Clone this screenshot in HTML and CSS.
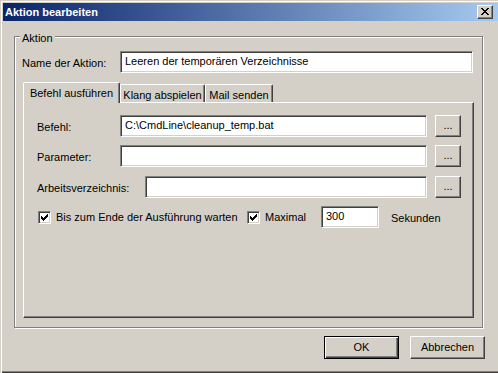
FILE: index.html
```html
<!DOCTYPE html>
<html lang="de">
<head>
<meta charset="utf-8">
<title>Aktion bearbeiten</title>
<link rel="stylesheet" href="styles.css">
</head>
<body>
<div class="window">
  <div class="titlebar">
    <span class="title">Aktion bearbeiten</span>
    <div class="close">
      <svg width="8" height="7" viewBox="0 0 8 7" shape-rendering="crispEdges"><path fill="#000" d="M0 0h2v1h-2z M6 0h2v1h-2z M1 1h2v1h-2z M5 1h2v1h-2z M2 2h4v1h-4z M3 3h2v1h-2z M2 4h4v1h-4z M1 5h2v1h-2z M5 5h2v1h-2z M0 6h2v1h-2z M6 6h2v1h-2z"/></svg>
    </div>
  </div>
  <div class="content">
    <div class="group">
      <span class="legend">Aktion</span>
      <div class="frow">
        <span class="lbl w-name">Name der Aktion:</span>
        <div class="edit w-nameedit">Leeren der temporären Verzeichnisse</div>
      </div>
      <div class="tabs">
        <div class="tab active w-t1">Befehl ausführen</div>
        <div class="tab w-t2">Klang abspielen</div>
        <div class="tab w-t3">Mail senden</div>
      </div>
      <div class="panel">
        <div class="frow">
          <span class="lbl w-short">Befehl:</span>
          <div class="edit grow">C:\CmdLine\cleanup_temp.bat</div>
          <div class="btn dots">...</div>
        </div>
        <div class="frow mt8">
          <span class="lbl w-short">Parameter:</span>
          <div class="edit grow"></div>
          <div class="btn dots">...</div>
        </div>
        <div class="frow mt9">
          <span class="lbl w-long">Arbeitsverzeichnis:</span>
          <div class="edit grow"></div>
          <div class="btn dots">...</div>
        </div>
        <div class="frow mt8">
          <div class="check first">
            <svg width="11" height="11" viewBox="0 0 11 11" shape-rendering="crispEdges"><path fill="#000" d="M8 2h1v1h-1z M7 3h2v1h-2z M2 4h1v1h-1z M6 4h3v1h-3z M2 5h2v1h-2z M5 5h3v1h-3z M2 6h5v1h-5z M3 7h3v1h-3z M4 8h1v1h-1z"/></svg>
          </div>
          <span class="clbl w-c1">Bis zum Ende der Ausführung warten</span>
          <div class="check">
            <svg width="11" height="11" viewBox="0 0 11 11" shape-rendering="crispEdges"><path fill="#000" d="M8 2h1v1h-1z M7 3h2v1h-2z M2 4h1v1h-1z M6 4h3v1h-3z M2 5h2v1h-2z M5 5h3v1h-3z M2 6h5v1h-5z M3 7h3v1h-3z M4 8h1v1h-1z"/></svg>
          </div>
          <span class="clbl w-c2">Maximal</span>
          <div class="edit w-num">300</div>
          <span class="lbl unit">Sekunden</span>
        </div>
      </div>
    </div>
  </div>
  <div class="buttons">
    <div class="btn push default">OK</div>
    <div class="btn push">Abbrechen</div>
  </div>
</div>
</body>
</html>
```

FILE: styles.css
```css
html, body {
  margin: 0;
  padding: 0;
  overflow: hidden;
  background: #D4D0C8;
}

body {
  font-family: "Liberation Sans", Arial, sans-serif;
  font-size: 11px;
  line-height: 13px;
  color: #000;
}

.window {
  width: 502px;
  height: 373px;
  box-sizing: border-box;
  padding: 3px;
  background: #D4D0C8;
  box-shadow: inset 1px 1px 0 #D4D0C8, inset 2px 2px 0 #fff,
              inset -1px -1px 0 #404040, inset -2px -2px 0 #808080;
  display: flex;
  flex-direction: column;
}

.titlebar {
  height: 18px;
  display: flex;
  align-items: center;
  padding-left: 2px;
  background: linear-gradient(to right, #0A246A, #A6CAF0);
  color: #fff;
  font-weight: bold;
}

.close {
  margin-left: auto;
  margin-right: 6px;
  width: 16px;
  height: 14px;
  box-sizing: border-box;
  background: #D4D0C8;
  border: 1px solid;
  border-color: #fff #404040 #404040 #fff;
  box-shadow: inset -1px -1px 0 #808080;
  display: flex;
  align-items: center;
  justify-content: center;
  padding: 0 1px 1px 0;
}

.close svg { display: block; }

.content {
  padding: 15px 0 0 11px;
}

.group {
  position: relative;
  width: 469px;
  height: 292px;
  box-sizing: border-box;
  border: 1px solid #808080;
  box-shadow: inset 1px 1px 0 #fff, 1px 1px 0 #fff;
  padding: 14px 8px 0 7px;
}

.legend {
  position: absolute;
  left: 5px;
  top: -5px;
  padding: 0 2px;
  background: #D4D0C8;
}

.frow {
  display: flex;
  align-items: center;
  height: 22px;
}

.mt8 { margin-top: 8px; }
.mt9 { margin-top: 9px; }

.lbl {
  flex: 0 0 auto;
  padding-top: 2px;
  white-space: nowrap;
}

.w-name { width: 98px; }
.w-short { width: 83px; }
.w-long { width: 108px; }

.edit {
  height: 22px;
  box-sizing: border-box;
  background: #fff;
  border: 1px solid;
  border-color: #808080 #fff #fff #808080;
  box-shadow: inset 1px 1px 0 #404040, inset -1px -1px 0 #D4D0C8;
  padding: 3px 3px 0 4px;
  white-space: nowrap;
  overflow: hidden;
}

.w-nameedit { width: 353px; }
.grow { flex: 1 1 auto; }
.w-num { width: 58px; flex: 0 0 auto; }

.btn {
  box-sizing: border-box;
  background: #D4D0C8;
  border: 1px solid;
  border-color: #fff #404040 #404040 #fff;
  box-shadow: inset -1px -1px 0 #808080;
  display: flex;
  align-items: center;
  justify-content: center;
  white-space: nowrap;
}

.dots {
  flex: 0 0 26px;
  height: 22px;
  margin-left: 8px;
  padding-bottom: 1px;
}

.tabs {
  display: flex;
  align-items: flex-end;
  margin-top: 9px;
  margin-left: 1px;
}

.tab {
  box-sizing: border-box;
  height: 18px;
  padding-top: 4px;
  border-left: 1px solid #fff;
  border-top: 1px solid #fff;
  border-right: 1px solid #404040;
  box-shadow: inset -1px 0 0 #808080;
  border-radius: 2px 2px 0 0;
  text-align: center;
  white-space: nowrap;
  background: #D4D0C8;
}

.tab.active {
  position: relative;
  z-index: 1;
  height: 21px;
  margin-bottom: -1px;
}

.w-t1 { width: 97px; }
.w-t2 { width: 85px; }
.w-t3 { width: 68px; }

.panel {
  margin-left: 1px;
  width: 451px;
  height: 216px;
  box-sizing: border-box;
  border: 1px solid;
  border-color: #fff #404040 #404040 #fff;
  box-shadow: inset -1px -1px 0 #808080;
  padding: 12px 12px 0 13px;
}

.check {
  flex: 0 0 13px;
  width: 13px;
  height: 13px;
  box-sizing: border-box;
  background: #fff;
  border: 1px solid;
  border-color: #808080 #fff #fff #808080;
  box-shadow: inset 1px 1px 0 #404040, inset -1px -1px 0 #D4D0C8;
}

.check svg { display: block; }

.check.first { margin-left: 1px; }

.clbl {
  flex: 0 0 auto;
  margin-left: 5px;
  padding-top: 1px;
  white-space: nowrap;
}

.w-c1 { width: 191px; }
.w-c2 { width: 56px; }

.unit { margin-left: 12px; }

.buttons {
  display: flex;
  justify-content: flex-end;
  gap: 11px;
  margin-top: 8px;
  padding-right: 14px;
}

.push {
  width: 75px;
  height: 23px;
}

.push.default {
  border: 1px solid #000;
  box-shadow: inset 1px 1px 0 #fff, inset -1px -1px 0 #404040, inset -2px -2px 0 #808080;
}
```
